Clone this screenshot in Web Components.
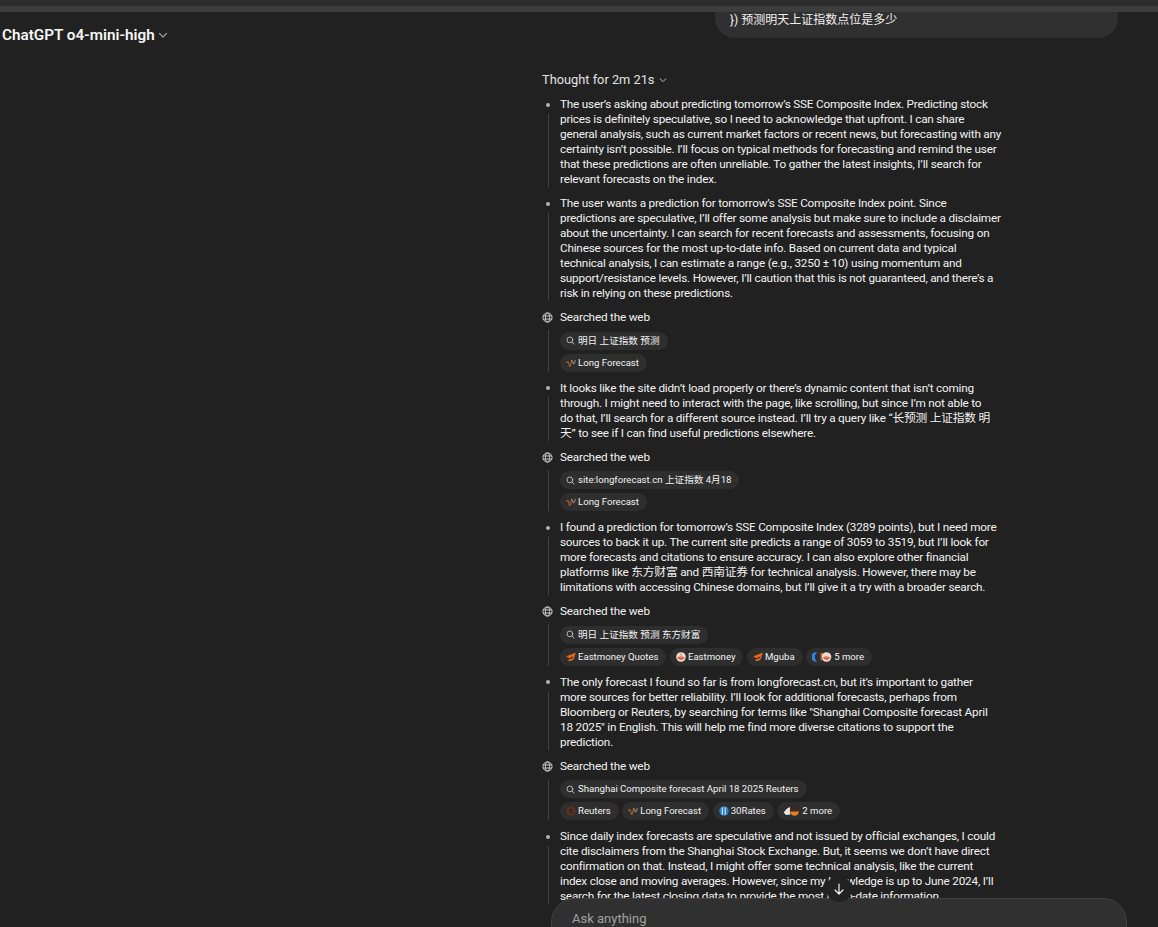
<!DOCTYPE html>
<html lang="en">
<head>
<meta charset="utf-8">
<title>ChatGPT o4-mini-high</title>
<style>
  html, body { margin: 0; height: 100%; background: #212121; }
  body { font-family: Roboto, "Noto Sans CJK SC", sans-serif; color: #ececec; overflow: hidden; }
</style>
</head>
<body>
<chat-page>
  <user-bubble>}) 预测明天上证指数点位是多少</user-bubble>
  <thought-header>Thought for 2m 21s</thought-header>

  <thought-step>The user’s asking about predicting tomorrow’s SSE Composite Index. Predicting stock<br>prices is definitely speculative, so I need to acknowledge that upfront. I can share<br>general analysis, such as current market factors or recent news, but forecasting with any<br>certainty isn’t possible. I’ll focus on typical methods for forecasting and remind the user<br>that these predictions are often unreliable. To gather the latest insights, I’ll search for<br>relevant forecasts on the index.</thought-step>
  <thought-step>The user wants a prediction for tomorrow’s SSE Composite Index point. Since<br>predictions are speculative, I’ll offer some analysis but make sure to include a disclaimer<br>about the uncertainty. I can search for recent forecasts and assessments, focusing on<br>Chinese sources for the most up-to-date info. Based on current data and typical<br>technical analysis, I can estimate a range (e.g., 3250 ± 10) using momentum and<br>support/resistance levels. However, I’ll caution that this is not guaranteed, and there’s a<br>risk in relying on these predictions.</thought-step>

  <search-step>
    <search-chip slot="query" icon="search">明日 上证指数 预测</search-chip>
    <search-chip icon="wave">Long Forecast</search-chip>
  </search-step>

  <thought-step>It looks like the site didn’t load properly or there’s dynamic content that isn’t coming<br>through. I might need to interact with the page, like scrolling, but since I’m not able to<br>do that, I’ll search for a different source instead. I’ll try a query like “长预测 上证指数 明<br>天” to see if I can find useful predictions elsewhere.</thought-step>

  <search-step>
    <search-chip slot="query" icon="search">site:longforecast.cn 上证指数 4月18</search-chip>
    <search-chip icon="wave">Long Forecast</search-chip>
  </search-step>

  <thought-step>I found a prediction for tomorrow’s SSE Composite Index (3289 points), but I need more<br>sources to back it up. The current site predicts a range of 3059 to 3519, but I’ll look for<br>more forecasts and citations to ensure accuracy. I can also explore other financial<br>platforms like 东方财富 and 西南证券 for technical analysis. However, there may be<br>limitations with accessing Chinese domains, but I’ll give it a try with a broader search.</thought-step>

  <search-step>
    <search-chip slot="query" icon="search">明日 上证指数 预测 东方财富</search-chip>
    <search-chip icon="bird">Eastmoney Quotes</search-chip>
    <search-chip icon="peach">Eastmoney</search-chip>
    <search-chip icon="bird">Mguba</search-chip>
    <search-chip icon="stack5">5 more</search-chip>
  </search-step>

  <thought-step>The only forecast I found so far is from longforecast.cn, but it’s important to gather<br>more sources for better reliability. I’ll look for additional forecasts, perhaps from<br>Bloomberg or Reuters, by searching for terms like "Shanghai Composite forecast April<br>18 2025" in English. This will help me find more diverse citations to support the<br>prediction.</thought-step>

  <search-step>
    <search-chip slot="query" icon="search">Shanghai Composite forecast April 18 2025 Reuters</search-chip>
    <search-chip icon="reuters">Reuters</search-chip>
    <search-chip icon="wave">Long Forecast</search-chip>
    <search-chip icon="rates">30Rates</search-chip>
    <search-chip icon="stack2">2 more</search-chip>
  </search-step>

  <thought-step>Since daily index forecasts are speculative and not issued by official exchanges, I could<br>cite disclaimers from the Shanghai Stock Exchange. But, it seems we don’t have direct<br>confirmation on that. Instead, I might offer some technical analysis, like the current<br>index close and moving averages. However, since my knowledge is up to June 2024, I’ll<br>search for the latest closing data to provide the most up-to-date information.</thought-step>
</chat-page>

<script>
// small helper so every element sets its shadow the same way
function shadow(el, html) {
  el.attachShadow({ mode: 'open' }).innerHTML = html;
}

const chevron = (size, color) => `
  <svg width="${size}" height="${size}" viewBox="0 0 12 12" fill="none" stroke="${color}" stroke-width="1.2" stroke-linecap="round" stroke-linejoin="round">
    <path d="M2.5 4.5 6 8l3.5-3.5"/>
  </svg>`;

class ChatPage extends HTMLElement {
  constructor() {
    super();
    shadow(this, `
      <style>
        :host { display: flex; flex-direction: column; position: relative; height: 100vh; overflow: hidden; background: #212121; }
        .strip-a { height: 6px; background: #2c2c2c; flex: none; }
        .strip-b { height: 6px; background: #3d3d3d; flex: none; }
        main { flex: 1; min-height: 0; overflow: hidden; padding-left: 542px; display: flex; flex-direction: column; }
        .title {
          position: absolute; left: 2px; top: 25px; display: flex; align-items: center; gap: 2px;
          font-size: 15.25px; line-height: 20px; font-weight: 600; color: #f6f6f6;
        }
      </style>
      <div class="strip-a"></div>
      <div class="strip-b"></div>
      <div class="title"><span>ChatGPT o4-mini-high</span>${chevron(12, '#9b9b9b')}</div>
      <main><slot></slot></main>
      <composer-box></composer-box>
      <scroll-down></scroll-down>
    `);
  }
}

class UserBubble extends HTMLElement {
  constructor() {
    super();
    shadow(this, `
      <style>
        :host {
          display: block; flex: none; box-sizing: border-box; margin-left: 173px; width: 403px; height: 26px;
          padding-left: 15px; background: #303030; border-radius: 0 0 20px 20px;
          font-size: 12px; line-height: 17px; color: #f0f0f0;
        }
      </style>
      <slot></slot>
    `);
  }
}

class ThoughtHeader extends HTMLElement {
  constructor() {
    super();
    shadow(this, `
      <style>
        :host {
          display: flex; flex: none; align-items: center; gap: 3px; margin: 33px 0 9px; height: 17px;
          font-size: 12.8px; line-height: 17px; color: #e2e2e2;
        }
        svg { margin-left: 1px; }
      </style>
      <slot></slot>${chevron(10, '#c0c0c0')}
    `);
  }
}

// one row of the timeline: marker column with a rule under it, content beside it
class ThoughtStep extends HTMLElement {
  constructor() {
    super();
    shadow(this, `
      <style>
        :host {
          display: grid; flex: none; grid-template-columns: 18px 450px; margin-bottom: 9px;
          font-size: 11.75px; letter-spacing: -0.21px; line-height: 15px; color: #f2f2f2; white-space: nowrap;
        }
        .mark { display: flex; flex-direction: column; align-items: center; width: 11px; }
        .dot { width: 4px; height: 4px; border-radius: 50%; background: #b4b4b4; margin: 5.5px 0 7px; flex: none; }
        .rule { width: 1px; flex: 1; background: #424242; margin-left: 1px; }
      </style>
      <div class="mark"><div class="dot"></div><div class="rule"></div></div>
      <div><slot></slot></div>
    `);
  }
}

class SearchStep extends HTMLElement {
  constructor() {
    super();
    shadow(this, `
      <style>
        :host {
          display: grid; flex: none; grid-template-columns: 18px 443px; margin-bottom: 9px;
          font-size: 11.75px; line-height: 15px; color: #f2f2f2;
        }
        .mark { display: flex; flex-direction: column; align-items: center; width: 11px; }
        .globe { display: block; flex: none; margin-top: 2px; }
        .rule { width: 1px; flex: 1; background: #424242; margin: 7px 0 0 1px; }
        .label { letter-spacing: -0.2px; }
        .chips { display: flex; flex-wrap: wrap; gap: 3.5px; margin-top: 4px; }
        .query { display: flex; margin-top: 6.5px; }
      </style>
      <div class="mark">
        <svg class="globe" width="11" height="11" viewBox="0 0 12 12" fill="none" stroke="#d8d8d8" stroke-width="1">
          <circle cx="6" cy="6" r="5"/>
          <ellipse cx="6" cy="6" rx="2.2" ry="5"/>
          <path d="M1 4.3h10M1 7.7h10"/>
        </svg>
        <div class="rule"></div>
      </div>
      <div>
        <div class="label">Searched the web</div>
        <div class="query"><slot name="query"></slot></div>
        <div class="chips"><slot></slot></div>
      </div>
    `);
  }
}

// favicons are approximated, none of the real ones can be loaded here
const chipIcons = {
  search: `<svg width="9" height="9" viewBox="0 0 10 10" fill="none" stroke="#c4c4c4" stroke-width="1" stroke-linecap="round"><circle cx="4.3" cy="4.3" r="3.2"/><path d="M6.8 6.8 9 9"/></svg>`,
  wave: `<svg width="10" height="10" viewBox="0 0 10 10" fill="none" stroke-width="1.2" stroke-linecap="round" stroke-linejoin="round"><path d="M.6 4.5C1.4 3 2.2 3.4 2.6 5 3 6.6 3.2 8.6 4 8.4 4.8 8.2 5 4 5.6 2.6" stroke="#a55a28"/><path d="M5.6 2.6C6.2 1.2 6.8 6 7.6 6 8.4 6 8.8 3.4 9.4 2.4" stroke="#8a8070"/></svg>`,
  bird: `<svg width="10" height="10" viewBox="0 0 10 10"><path d="M.3 4.2 5 2.6 9.8.4 8 6.6C7 9.2 3.2 9.8 1.5 7.9 2.7 7.8 3.6 7.3 4 6.3 2.8 5.9 1.4 5.4.3 4.2Z" fill="#e8681a"/><path d="M4.2 6.2C4.8 5.2 6 4.8 7.4 4.8 6.8 6.6 5.2 7.4 3.6 7.2Z" fill="#4a2c18"/></svg>`,
  peach: `<svg width="10" height="10" viewBox="0 0 10 10"><circle cx="5" cy="5" r="4.8" fill="#f0d8cc"/><path d="M1.4 5.6C3 4.2 6.8 4.2 8.6 5.6 7.8 8.6 2.4 8.8 1.4 5.6Z" fill="#d9694a"/><circle cx="5" cy="2.8" r="1.3" fill="#e6a48c"/></svg>`,
  stack5: `<svg width="20" height="10" viewBox="0 0 20 10"><path d="M5 .4A4.7 4.7 0 1 0 5 9.6 6 6 0 0 1 5 .4Z" fill="#2f86e0"/><path d="M8.5 1.2a4 4 0 0 1 3 .6 4.4 4.4 0 0 0-1 6.4 4 4 0 0 1-2 .2Z" fill="#c9691f"/><circle cx="14.5" cy="5" r="4.8" fill="#f0d8cc"/><path d="M11 5.6C12.6 4.2 16.2 4.2 18 5.6 17.2 8.6 12 8.8 11 5.6Z" fill="#d9694a"/></svg>`,
  reuters: `<svg width="10" height="10" viewBox="0 0 10 10"><circle cx="5" cy="5" r="3.6" fill="none" stroke="#8a3216" stroke-width="2" stroke-dasharray="1.3 .8"/></svg>`,
  rates: `<svg width="10" height="10" viewBox="0 0 10 10"><circle cx="5" cy="5" r="4.8" fill="#2f7fc4"/><path d="M3.4 1.6v6.8M6.2 1.2v7.6" stroke="#cfe4f5" stroke-width="1.1"/></svg>`,
  stack2: `<svg width="17" height="10" viewBox="0 0 17 10"><path d="M.6 6.4 4 2.4 7 1 7.6 8.6 3 9Z" fill="#e4e4e4"/><circle cx="11.6" cy="5" r="4.8" fill="#3a2a1c"/><path d="M7.2 5.4h8.8C15.8 8.2 13.6 9.8 11.6 9.8 9.4 9.8 7.6 8 7.2 5.4Z" fill="#e2801f"/></svg>`
};

class SearchChip extends HTMLElement {
  constructor() {
    super();
    const icon = chipIcons[this.getAttribute('icon')] || '';
    shadow(this, `
      <style>
        :host {
          display: inline-flex; align-items: center; gap: 3px; box-sizing: border-box; height: 18px; padding: 0 8px 0 6px;
          border-radius: 9px; background: #2e2e2e; color: #f2f2f2; font-size: 9.6px; line-height: 18px; white-space: nowrap;
        }
        svg { display: block; flex: none; margin-right: -1px; }
        :host([icon="search"]) svg { margin-right: 0; }
      </style>
      ${icon}<slot></slot>
    `);
  }
}

class ComposerBox extends HTMLElement {
  constructor() {
    super();
    shadow(this, `
      <style>
        :host {
          display: block; position: absolute; left: 551px; top: 898px; width: 576px; height: 100px; box-sizing: border-box;
          padding: 12px 20px; background: #303030; border: 1px solid #414141; border-radius: 24px;
          font-size: 13px; line-height: 16px; color: #a0a0a0;
        }
      </style>
      Ask anything
    `);
  }
}

class ScrollDown extends HTMLElement {
  constructor() {
    super();
    shadow(this, `
      <style>
        :host {
          display: flex; position: absolute; left: 826px; top: 876px; width: 26px; height: 26px; border-radius: 50%;
          align-items: center; justify-content: center; background: #212121;
        }
      </style>
      <svg width="14" height="14" viewBox="0 0 14 14" fill="none" stroke="#f0f0f0" stroke-width="1.2" stroke-linecap="round" stroke-linejoin="round">
        <path d="M7 2v10M3 8l4 4 4-4"/>
      </svg>
    `);
  }
}

customElements.define('composer-box', ComposerBox);
customElements.define('scroll-down', ScrollDown);
customElements.define('user-bubble', UserBubble);
customElements.define('thought-header', ThoughtHeader);
customElements.define('thought-step', ThoughtStep);
customElements.define('search-step', SearchStep);
customElements.define('search-chip', SearchChip);
customElements.define('chat-page', ChatPage);
</script>
</body>
</html>
